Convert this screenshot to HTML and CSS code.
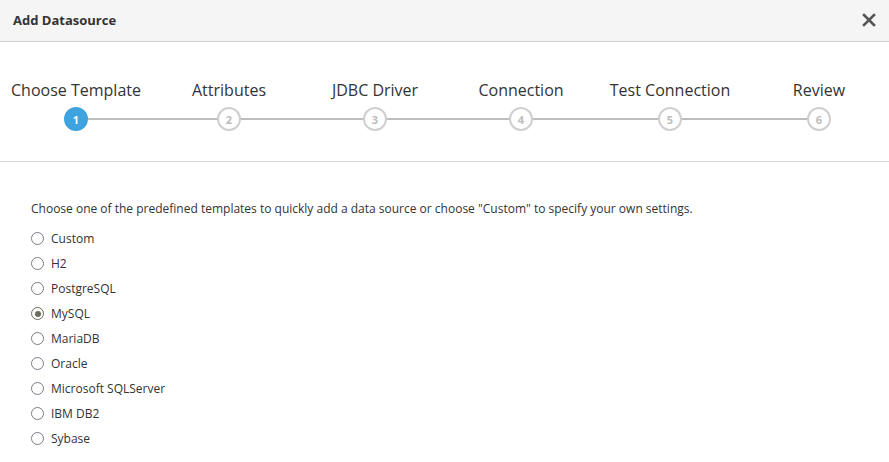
FILE: index.html
```html
<!DOCTYPE html>
<html>
<head>
<meta charset="utf-8">
<link rel="stylesheet" href="styles.css">
</head>
<body>
<div class="dialog">
  <header class="dialog-header">
    <h1 class="dialog-title">Add Datasource</h1>
    <span class="close" aria-label="Close">
      <svg width="14" height="14" viewBox="0 0 14 14"><path d="M2 2L12 12M12 2L2 12" stroke="#555" stroke-width="2.6" stroke-linecap="square"/></svg>
    </span>
  </header>
  <nav class="steps">
    <div class="step active"><span class="step-label">Choose Template</span><span class="step-num">1</span></div>
    <div class="step"><span class="step-label">Attributes</span><span class="step-num">2</span></div>
    <div class="step"><span class="step-label">JDBC Driver</span><span class="step-num">3</span></div>
    <div class="step"><span class="step-label">Connection</span><span class="step-num">4</span></div>
    <div class="step"><span class="step-label">Test Connection</span><span class="step-num">5</span></div>
    <div class="step last"><span class="step-label">Review</span><span class="step-num">6</span></div>
  </nav>
  <section class="content">
    <p class="intro">Choose one of the predefined templates to quickly add a data source or choose "Custom" to specify your own settings.</p>
    <ul class="options">
      <li class="option"><span class="radio"></span>Custom</li>
      <li class="option"><span class="radio"></span>H2</li>
      <li class="option"><span class="radio"></span>PostgreSQL</li>
      <li class="option"><span class="radio checked"></span>MySQL</li>
      <li class="option"><span class="radio"></span>MariaDB</li>
      <li class="option"><span class="radio"></span>Oracle</li>
      <li class="option"><span class="radio"></span>Microsoft SQLServer</li>
      <li class="option"><span class="radio"></span>IBM DB2</li>
      <li class="option"><span class="radio"></span>Sybase</li>
    </ul>
  </section>
</div>
</body>
</html>
```

FILE: styles.css
```css
* { box-sizing: border-box; }
html, body { margin: 0; padding: 0; background: #fff; }
body {
  font-family: "Open Sans", "Noto Sans", sans-serif;
  color: #333;
}
.dialog-header {
  height: 42px;
  background: #f5f5f5;
  border-bottom: 1px solid #d0d0d0;
  display: flex;
  align-items: center;
  justify-content: space-between;
  padding: 0 13px 0 13px;
}
.dialog-title {
  margin: 0;
  font-size: 13px;
  font-weight: 700;
  color: #333;
  line-height: 18px;
  margin-top: -2px;
}
.close {
  display: flex;
  margin-top: -2px;
}
.steps {
  position: relative;
  display: grid;
  grid-template-columns: 152px 154px 138px 154px 144px 147px;
  padding: 37px 0 30px;
  border-bottom: 1px solid #d8d8d8;
}
.steps::before {
  content: "";
  position: absolute;
  left: 76px;
  right: 70px;
  bottom: 41px;
  height: 2px;
  background: #bdbdbd;
}
.step {
  position: relative;
  display: flex;
  flex-direction: column;
  align-items: center;
  gap: 6px;
}
.step.last { padding-left: 7px; }
.step-label {
  font-size: 16px;
  line-height: 22px;
  color: #333;
  white-space: nowrap;
}
.step-num {
  width: 24px;
  height: 24px;
  border-radius: 50%;
  border: 2px solid #cfcfcf;
  background: #fff;
  color: #bdbdbd;
  font-size: 11px;
  font-weight: 700;
  display: flex;
  align-items: center;
  justify-content: center;
}
.step.active .step-num {
  background: #3ea3de;
  border-color: #3ea3de;
  color: #fff;
}
.content {
  padding: 38px 31px 0;
}
.intro {
  margin: 0 0 9px;
  font-size: 12px;
  line-height: 17px;
  color: #333;
}
.options {
  list-style: none;
  margin: 0;
  padding: 0;
}
.option {
  display: flex;
  align-items: center;
  height: 25px;
  font-size: 12px;
  color: #333;
  gap: 7px;
}
.radio {
  width: 13px;
  height: 13px;
  border-radius: 50%;
  border: 1.5px solid #7c7a86;
  background: #fff;
  display: flex;
  align-items: center;
  justify-content: center;
}
.radio.checked { border-color: #6e6a5a; }
.radio.checked::after {
  content: "";
  width: 6px;
  height: 6px;
  border-radius: 50%;
  background: #6e6a5a;
}
```
